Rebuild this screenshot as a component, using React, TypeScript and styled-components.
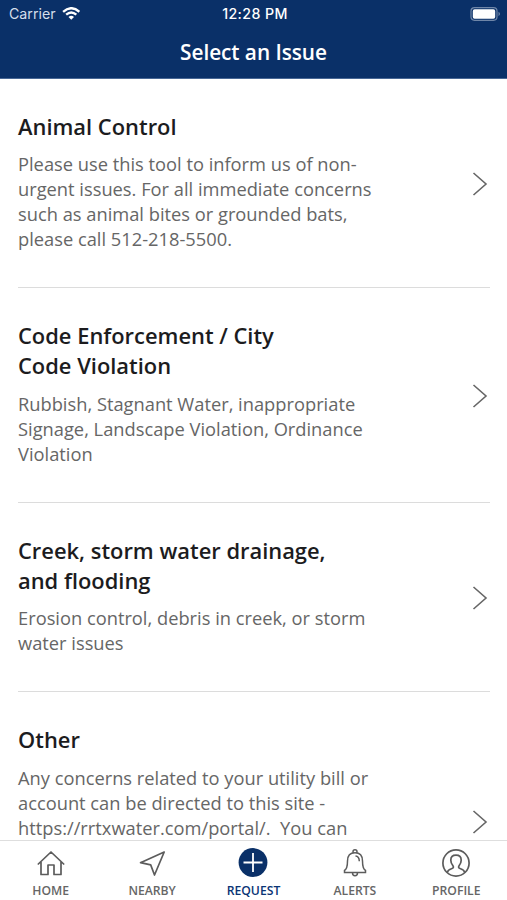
import React from "react";
import styled, { createGlobalStyle } from "styled-components";

const Global = createGlobalStyle`
  * { box-sizing: border-box; }
  body { margin: 0; background: #fff; font-family: "Open Sans", sans-serif; }
`;

const Screen = styled.div`
  width: 507px;
  height: 900px;
  display: flex;
  flex-direction: column;
  overflow: hidden;
`;

const Header = styled.header`
  height: 79px;
  flex: none;
  background: #0a3068;
  border-bottom: 1px solid #486795;
  color: #fff;
`;

const StatusBar = styled.div`
  height: 27px;
  padding: 0 6px 0 9px;
  display: grid;
  grid-template-columns: 1fr auto 1fr;
  align-items: center;
  font: 14.2px/27px Inter, sans-serif;
`;

const Carrier = styled.div`
  display: flex;
  align-items: center;
  gap: 6px;
  color: #d5deeb;
`;

const Clock = styled.div`
  font-weight: 500;
  font-size: 14.2px;
  letter-spacing: 0.4px;
`;

const Battery = styled.div`
  display: flex;
  justify-content: flex-end;
`;

const Title = styled.h1`
  margin: 0;
  font-size: 20.8px;
  font-weight: 600;
  letter-spacing: -0.05px;
  line-height: 50px;
  text-align: center;
`;

const List = styled.main`
  flex: 1;
  min-height: 0;
  overflow: hidden;
  padding: 0 17px 0 18px;
`;

const Issue = styled.section<{ $height: number }>`
  height: ${(p) => p.$height}px;
  padding-top: 33px;
  border-bottom: 1px solid #dcdcdc;
  display: flex;
  justify-content: space-between;
`;

const IssueName = styled.h2<{ $gap: number }>`
  margin: 0 0 ${(p) => p.$gap}px;
  font-size: 21.9px;
  line-height: 30px;
  font-weight: 600;
  color: #1c1c1e;
  white-space: pre;
`;

const Description = styled.p`
  margin: 0;
  font-size: 18.3px;
  line-height: 25px;
  color: #666;
  white-space: pre;
`;

const Chevron = styled.svg<{ $top: number }>`
  flex: none;
  margin: ${(p) => p.$top}px 2px 0 0;
`;

const TabBar = styled.nav`
  height: 60px;
  flex: none;
  border-top: 1px solid #dedede;
  display: grid;
  grid-template-columns: repeat(5, 1fr);
`;

const Tab = styled.div<{ $active?: boolean }>`
  display: flex;
  flex-direction: column;
  align-items: center;
  padding-top: 7px;
  gap: 4px;
  font-size: 12.2px;
  line-height: 17px;
  font-weight: 600;
  color: ${(p) => (p.$active ? "#0a3475" : "#666")};
`;

const issues = [
  { h: 209, top: 59, gap: 9, name: "Animal Control", text: "Please use this tool to inform us of non-\nurgent issues. For all immediate concerns\nsuch as animal bites or grounded bats,\nplease call 512-218-5500." },
  { h: 215, top: 62, gap: 10, name: "Code Enforcement / City\nCode Violation", text: "Rubbish, Stagnant Water, inappropriate\nSignage, Landscape Violation, Ordinance\nViolation" },
  { h: 189, top: 49, gap: 9, name: "Creek, storm water drainage,\nand flooding", text: "Erosion control, debris in creek, or storm\nwater issues" },
  { h: 260, top: 84, gap: 10, name: "Other", text: "Any concerns related to your utility bill or\naccount can be directed to this site -\nhttps://rrtxwater.com/portal/.  You can" },
];

const line = { fill: "none", stroke: "#5c5c5c", strokeWidth: 1.7 };

const icons = {
  home: (
    <svg width="30" height="30" viewBox="0 0 30 30" {...line} strokeLinejoin="round" strokeLinecap="round">
      <path d="M2.3 16 15 4l12.7 12M5 14v12.5h7V17h6v9.5h7V14" />
    </svg>
  ),
  nearby: (
    <svg width="30" height="30" viewBox="0 0 30 30" {...line} strokeLinejoin="round">
      <path d="M27.2 4 3.5 14.7l10.2 2.2L17.5 27z" />
    </svg>
  ),
  request: (
    <svg width="30" height="30" viewBox="0 0 30 30">
      <circle cx="15" cy="14.5" r="14.4" fill="#0a3068" />
      <path d="M15 5v19M5.5 14.5h19" stroke="#fff" strokeWidth="1.8" />
    </svg>
  ),
  alerts: (
    <svg width="30" height="30" viewBox="0 0 30 30" {...line} strokeWidth="1.5">
      <path d="M13 5V3.7q0-1.9 2-1.9t2 1.9V5M7.5 13c0-5 2.8-8.2 7.5-8.2s7.5 3.2 7.5 8.2c0 6 .6 8 3 9.4v2.1h-21v-2.1c2.4-1.4 3-3.4 3-9.4zM12.5 24.7q0 3 2.5 3t2.5-3M15.5 8c2.6.2 3.8 2.1 3.8 5.3" />
    </svg>
  ),
  profile: (
    <svg width="30" height="30" viewBox="0 0 30 30" {...line}>
      <circle cx="15" cy="15" r="13.1" />
      <path d="M6.2 24.5c.5-2.3 2.2-3.2 4.3-3.8 2.2-.6 2.3-1.7 1.3-3.2-1.2-1.6-2-3.2-2-5.3 0-3 2-5 5.2-5s5.2 2 5.2 5c0 2.1-.8 3.7-2 5.3-1 1.5-.9 2.6 1.3 3.2 2.1.6 3.8 1.5 4.3 3.8" />
    </svg>
  ),
};

const tabs: { icon: keyof typeof icons; label: string }[] = [
  { icon: "home", label: "HOME" },
  { icon: "nearby", label: "NEARBY" },
  { icon: "request", label: "REQUEST" },
  { icon: "alerts", label: "ALERTS" },
  { icon: "profile", label: "PROFILE" },
];

export default function App() {
  return (
    <Screen>
      <Global />
      <Header>
        <StatusBar>
          <Carrier>
            Carrier
            <svg width="18.5" height="14" viewBox="0 0 20 15" fill="none" stroke="#fff" strokeWidth="2.5">
              <path d="M1.2 5.1q8.8-7.8 17.6 0M4.5 8.3q5.5-4.8 11 0" />
              <path d="m7 10.7 3 3.1 3-3.1q-3-2.4-6 0z" fill="#fff" stroke="none" />
            </svg>
          </Carrier>
          <Clock>12:28 PM</Clock>
          <Battery>
            <svg width="31" height="14" viewBox="0 0 31 14">
              <rect x="1" y=".7" width="26" height="12.6" rx="3.5" fill="none" stroke="#6f86a8" strokeWidth="1.2" />
              <rect x="2.8" y="2.3" width="22.4" height="9.4" rx="1.8" fill="#fff" />
              <path d="M28.5 4.8q3 2.2 0 4.4z" fill="#6f86a8" />
            </svg>
          </Battery>
        </StatusBar>
        <Title>Select an Issue</Title>
      </Header>
      <List>
        {issues.map((i) => (
          <Issue key={i.name} $height={i.h}>
            <div>
              <IssueName $gap={i.gap}>{i.name}</IssueName>
              <Description>{i.text}</Description>
            </div>
            <Chevron $top={i.top} width="16" height="26" viewBox="0 0 16 26" fill="none" stroke="#666" strokeWidth="1.6">
              <path d="m1.5 2 12.5 11L1.5 24" />
            </Chevron>
          </Issue>
        ))}
      </List>
      <TabBar>
        {tabs.map((t) => (
          <Tab key={t.label} $active={t.icon === "request"}>
            {icons[t.icon]}
            {t.label}
          </Tab>
        ))}
      </TabBar>
    </Screen>
  );
}
